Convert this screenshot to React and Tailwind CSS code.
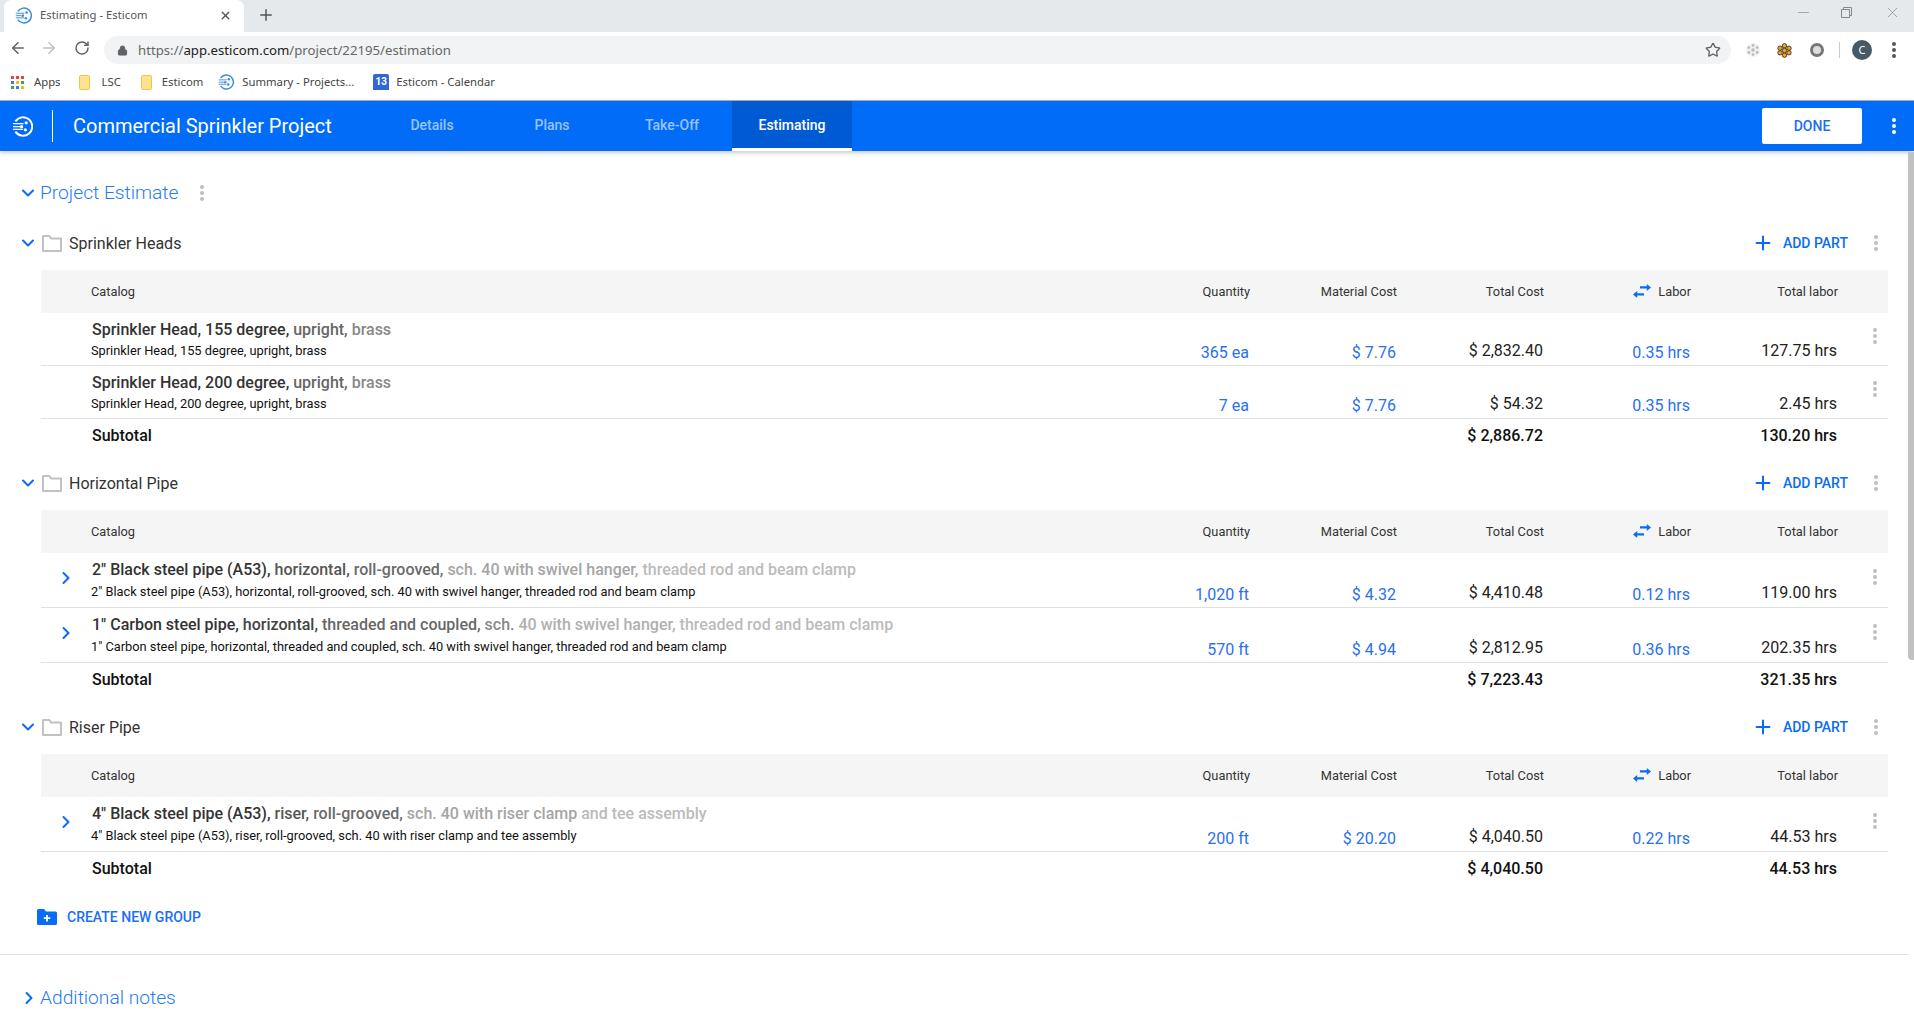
import React from "react";
import { ChevronDown, ChevronRight, Plus, X, ArrowLeft, ArrowRight, RotateCw, Lock, Star, Minus } from "lucide-react";

const groups = [
  {
    name: "Sprinkler Heads",
    rowH: "h-[53px]",
    subMt: "mt-[3px]",
    dotsPt: "pt-[15px]",
    rows: [
      {
        segs: [["Sprinkler Head, 155 degree,", "text-[#333]"], [" upright,", "text-[#666]"], [" brass", "text-[#888]"]],
        sub: "Sprinkler Head, 155 degree, upright, brass",
        qty: "365 ea", mat: "$ 7.76", total: "$ 2,832.40", labor: "0.35 hrs", tlabor: "127.75 hrs",
      },
      {
        segs: [["Sprinkler Head, 200 degree,", "text-[#333]"], [" upright,", "text-[#666]"], [" brass", "text-[#888]"]],
        sub: "Sprinkler Head, 200 degree, upright, brass",
        qty: "7 ea", mat: "$ 7.76", total: "$ 54.32", labor: "0.35 hrs", tlabor: "2.45 hrs",
      },
    ],
    subTotal: "$ 2,886.72",
    subLabor: "130.20 hrs",
  },
  {
    name: "Horizontal Pipe",
    rowH: "h-[55px]",
    subMt: "mt-[4px]",
    dotsPt: "pt-[16px]",
    expand: true,
    rows: [
      {
        segs: [
          ['2" Black steel pipe (A53),', "text-[#333]"],
          [" horizontal,", "text-[#555]"],
          [" roll-grooved,", "text-[#6b6b6b]"],
          [" sch. 40 with swivel hanger,", "text-[#a5a5a5]"],
          [" threaded rod and beam clamp", "text-[#bbb]"],
        ],
        sub: '2" Black steel pipe (A53), horizontal, roll-grooved, sch. 40 with swivel hanger, threaded rod and beam clamp',
        qty: "1,020 ft", mat: "$ 4.32", total: "$ 4,410.48", labor: "0.12 hrs", tlabor: "119.00 hrs",
      },
      {
        segs: [
          ['1" Carbon steel pipe,', "text-[#333]"],
          [" horizontal,", "text-[#444]"],
          [" threaded and coupled,", "text-[#666]"],
          [" sch.", "text-[#888]"],
          [" 40 with swivel hanger,", "text-[#b0b0b0]"],
          [" threaded rod and beam clamp", "text-[#bbb]"],
        ],
        sub: '1" Carbon steel pipe, horizontal, threaded and coupled, sch. 40 with swivel hanger, threaded rod and beam clamp',
        qty: "570 ft", mat: "$ 4.94", total: "$ 2,812.95", labor: "0.36 hrs", tlabor: "202.35 hrs",
      },
    ],
    subTotal: "$ 7,223.43",
    subLabor: "321.35 hrs",
  },
  {
    name: "Riser Pipe",
    rowH: "h-[55px]",
    subMt: "mt-[4px]",
    dotsPt: "pt-[16px]",
    expand: true,
    rows: [
      {
        segs: [
          ['4" Black steel pipe (A53),', "text-[#333]"],
          [" riser,", "text-[#555]"],
          [" roll-grooved,", "text-[#6b6b6b]"],
          [" sch. 40 with riser clamp", "text-[#a5a5a5]"],
          [" and tee assembly", "text-[#bbb]"],
        ],
        sub: '4" Black steel pipe (A53), riser, roll-grooved, sch. 40 with riser clamp and tee assembly',
        qty: "200 ft", mat: "$ 20.20", total: "$ 4,040.50", labor: "0.22 hrs", tlabor: "44.53 hrs",
      },
    ],
    subTotal: "$ 4,040.50",
    subLabor: "44.53 hrs",
  },
];

const Dots = ({ color = "bg-[#bcbfc3]" }) => (
  <div className="flex flex-col gap-[2px]">
    <span className={`w-[4px] h-[4px] rounded-full ${color}`} />
    <span className={`w-[4px] h-[4px] rounded-full ${color}`} />
    <span className={`w-[4px] h-[4px] rounded-full ${color}`} />
  </div>
);

const Logo = ({ color = "#fff", size = 21, width = 1.9 }) => (
  <svg width={size} height={size} viewBox="0 0 21 21" fill="none" stroke={color} strokeWidth={width}>
    <path d="M3.4 5.4A9.2 9.2 0 1 1 3.4 15.6" />
    <path d="M1 7.7H11.5M1 10.7H8M1 13.4H11" strokeWidth="1.2" />
    <circle cx="14.2" cy="6.8" r="1.6" fill={color} stroke="none" />
    <circle cx="9.6" cy="10.7" r="1.6" fill={color} stroke="none" />
    <circle cx="13.4" cy="13.8" r="1.6" fill={color} stroke="none" />
  </svg>
);

const FolderOutline = () => (
  <svg width="20" height="17" viewBox="0 0 20 17" fill="none" stroke="#c2c2c2" strokeWidth="2">
    <path d="M1 16V1H7.4L9.2 3.6H19V16Z" strokeLinejoin="round" />
  </svg>
);

const Swap = () => (
  <svg width="18" height="14" viewBox="0 0 18 14" fill="#0a6cf5" className="-mt-[2px]">
    <path d="M0 10.5L4.2 6.9V9.3H11V11.6H4.2V14Z" />
    <path d="M18 3.5L13.8 0V2.3H7V4.6H13.8V7Z" />
  </svg>
);

const FolderPlus = () => (
  <svg width="20" height="16" viewBox="0 0 20 16">
    <path d="M0 1.5A1.5 1.5 0 0 1 1.5 0H7L9 2.4H18.5A1.5 1.5 0 0 1 20 3.9V14.5A1.5 1.5 0 0 1 18.5 16H1.5A1.5 1.5 0 0 1 0 14.5Z" fill="#0a6cf5" />
    <path d="M9.1 6H10.9V8.3H13.2V10.1H10.9V12.4H9.1V10.1H6.8V8.3H9.1Z" fill="#fff" />
  </svg>
);

const AppsGrid = () => (
  <svg width="13" height="13" viewBox="0 0 13 13">
    <rect x="0" y="0" width="3" height="3" fill="#e8453c" />
    <rect x="5" y="0" width="3" height="3" fill="#e8453c" />
    <rect x="10" y="0" width="3" height="3" fill="#e8453c" />
    <rect x="0" y="5" width="3" height="3" fill="#3b7ded" />
    <rect x="5" y="5" width="3" height="3" fill="#fbbc05" />
    <rect x="10" y="5" width="3" height="3" fill="#34a853" />
    <rect x="0" y="10" width="3" height="3" fill="#34a853" />
    <rect x="5" y="10" width="3" height="3" fill="#3b7ded" />
    <rect x="10" y="10" width="3" height="3" fill="#fbbc05" />
  </svg>
);

const BookmarkFolder = () => (
  <svg width="11" height="15" viewBox="0 0 11 15">
    <rect x="0.5" y="0.5" width="10" height="14" rx="1" fill="#fde293" stroke="#f0c64a" />
  </svg>
);

const Calendar = () => (
  <div className="w-4 h-4 bg-[#3367d6] text-white text-[10px] leading-4 font-bold text-center rounded-t-[2px] [font-family:Roboto,sans-serif]">13</div>
);

const Bookmark = ({ icon, label, gap = "gap-2", ml = "ml-0" }) => (
  <div className={`flex items-center ${gap} ${ml}`}>
    {icon}
    <span className="text-[11.3px] text-[#444] whitespace-nowrap">{label}</span>
  </div>
);

const Row = ({ row, group }) => (
  <div className={`grid grid-cols-[50px_1fr_147px_147px_147px_147px_147px_50px] ${group.rowH} border-b border-[#e0e0e0]`}>
    <div className="flex items-start justify-center pt-[15px]">
      {group.expand && <ChevronRight size={20} color="#0a6cf5" strokeWidth={2.4} />}
    </div>
    <div className="pt-[7px] pl-px">
      <div className="text-[16px] leading-5 font-medium whitespace-nowrap">
        {row.segs.map(([t, c], i) => (
          <span key={i} className={c}>{t}</span>
        ))}
      </div>
      <div className={`${group.subMt} -ml-px text-[12.8px] leading-4 text-[#111] whitespace-nowrap`}>{row.sub}</div>
    </div>
    <div className="flex items-end justify-end pb-[2px] pr-px text-[16px] leading-5 text-[#2a6ff0]">{row.qty}</div>
    <div className="flex items-end justify-end pb-[2px] pr-px text-[16px] leading-5 text-[#2a6ff0]">{row.mat}</div>
    <div className="flex items-end justify-end pb-[4px] pr-px text-[16px] leading-5 text-[#222]">{row.total}</div>
    <div className="flex items-end justify-end pb-[2px] pr-px text-[16px] leading-5 text-[#2a6ff0]">{row.labor}</div>
    <div className="flex items-end justify-end pb-[4px] pr-px text-[16px] leading-5 text-[#222]">{row.tlabor}</div>
    <div className={`${group.dotsPt} pl-[35px]`}>
      <Dots />
    </div>
  </div>
);

const Group = ({ group }) => (
  <div className="mb-3">
    <div className="flex items-center h-10 pl-[18px] pr-[36px]">
      <ChevronDown size={20} color="#0a6cf5" strokeWidth={2.4} />
      <div className="ml-[4px]"><FolderOutline /></div>
      <div className="ml-[7px] pt-px text-[16px] text-[#333]">{group.name}</div>
      <div className="ml-auto flex items-center text-[#0a6cf5]">
        <Plus size={22} strokeWidth={2.2} />
        <span className="ml-[9px] pt-px text-[14px] font-medium">ADD PART</span>
        <div className="ml-[26px]"><Dots /></div>
      </div>
    </div>
    <div className="mt-[7px] ml-[41px] w-[1847px]">
      <div className="grid grid-cols-[50px_1fr_147px_147px_147px_147px_147px_50px] h-[43px] items-center bg-[#f5f5f5] text-[12.8px] text-[#333]">
        <div />
        <div>Catalog</div>
        <div className="text-right">Quantity</div>
        <div className="text-right">Material Cost</div>
        <div className="text-right">Total Cost</div>
        <div className="flex items-center justify-end gap-[7px]"><Swap /><span>Labor</span></div>
        <div className="text-right">Total labor</div>
        <div />
      </div>
      {group.rows.map((row, i) => (
        <Row key={i} row={row} group={group} />
      ))}
      <div className="grid grid-cols-[50px_1fr_147px_147px_147px_147px_147px_50px] h-8 pt-px items-center text-[16px] font-medium text-[#111]">
        <div />
        <div className="pl-px">Subtotal</div>
        <div />
        <div />
        <div className="text-right pr-px">{group.subTotal}</div>
        <div />
        <div className="text-right pr-px">{group.subLabor}</div>
        <div />
      </div>
    </div>
  </div>
);

const ChromeBar = () => (
  <div className="[font-family:'Noto_Sans',sans-serif]">
    <div className="h-8 bg-[#e6e9ec] flex items-center">
      <div className="ml-[4px] w-[240px] h-8 bg-white rounded-t-[8px] flex items-center pl-[11px] pr-[12px] pb-[2px]">
        <Logo color="#3b8ed8" size={17} width={1.8} />
        <span className="ml-[8px] text-[11.3px] text-[#555]">Estimating - Esticom</span>
        <X size={13} color="#555" strokeWidth={2.5} className="ml-auto" />
      </div>
      <Plus size={18} color="#555" strokeWidth={2} className="ml-[13px] mb-[2px]" />
      <div className="ml-auto flex items-center text-[#888] pb-[8px]">
        <Minus size={17} strokeWidth={1} className="mr-[29px]" />
        <svg width="11" height="11" viewBox="0 0 11 11" fill="none" stroke="#888" className="mr-[32px]">
          <path d="M0.5 2.5H8.5V10.5H0.5ZM2.5 2.5V0.5H10.5V8.5H8.5" />
        </svg>
        <X size={17} strokeWidth={1} className="mr-[13px]" />
      </div>
    </div>
    <div className="h-8 bg-white flex items-center">
      <ArrowLeft size={18} color="#5f6368" strokeWidth={2} className="ml-[9px]" />
      <ArrowRight size={18} color="#bdc1c6" strokeWidth={2} className="ml-[13px]" />
      <RotateCw size={16} color="#5f6368" strokeWidth={2.2} className="ml-[16px]" />
      <div className="ml-[14px] mt-[4px] w-[1627px] h-7 bg-[#f1f3f4] rounded-full flex items-center pl-[13px] pr-[10px]">
        <Lock size={11} color="#5f6368" fill="#5f6368" />
        <span className="ml-[10px] pt-[2px] text-[13.2px] text-[#666]">
          https://<span className="text-[#222]">app.esticom.com</span>/project/22195/estimation
        </span>
        <Star size={16} color="#5f6368" strokeWidth={2} className="ml-auto" />
      </div>
      <div className="ml-[15px] mt-[4px] flex items-center">
        <svg width="14" height="14" viewBox="0 0 14 14" fill="#b9bdc2">
          <circle cx="7" cy="7" r="7" fill="#f1f1f1" />
          <circle cx="7" cy="7" r="1.8" /><circle cx="7" cy="2.4" r="1.4" /><circle cx="7" cy="11.6" r="1.4" />
          <circle cx="2.8" cy="4.6" r="1.4" /><circle cx="11.2" cy="4.6" r="1.4" /><circle cx="2.8" cy="9.4" r="1.4" /><circle cx="11.2" cy="9.4" r="1.4" />
        </svg>
        <svg width="15" height="15" viewBox="0 0 15 15" fill="#f5a623" stroke="#222" strokeWidth="0.8" className="ml-[17px]">
          <circle cx="7.5" cy="2.8" r="2.2" /><circle cx="7.5" cy="12.2" r="2.2" /><circle cx="3" cy="5.2" r="2.2" /><circle cx="12" cy="5.2" r="2.2" />
          <circle cx="3" cy="9.8" r="2.2" /><circle cx="12" cy="9.8" r="2.2" /><circle cx="7.5" cy="7.5" r="2.2" />
        </svg>
        <div className="ml-[18px] w-[14px] h-[14px] rounded-full bg-[#ddd] border-[3px] border-[#777]" />
        <div className="ml-[15px] w-px h-4 bg-[#ccc]" />
        <div className="ml-[12px] w-5 h-5 rounded-full bg-[#455a64] text-white text-[11px] leading-5 text-center">C</div>
        <div className="ml-[20px]"><Dots color="bg-[#555]" /></div>
      </div>
    </div>
    <div className="h-9 bg-white flex items-center pl-[11px]">
      <Bookmark icon={<AppsGrid />} label="Apps" gap="gap-[10px]" />
      <Bookmark icon={<BookmarkFolder />} label="LSC" gap="gap-[12px]" ml="ml-[18px]" />
      <Bookmark icon={<BookmarkFolder />} label="Esticom" gap="gap-[10px]" ml="ml-[20px]" />
      <Bookmark icon={<Logo color="#3b8ed8" size={16} width={1.8} />} label="Summary - Projects..." ml="ml-[15px]" />
      <Bookmark icon={<Calendar />} label="Esticom - Calendar" gap="gap-[7px]" ml="ml-[19px]" />
    </div>
  </div>
);

const AppHeader = () => (
  <div className="border-t border-[#aaa] h-[51px] bg-[#006cf8] flex items-center shadow-[0_2px_4px_rgba(0,0,0,0.2)] relative">
    <div className="ml-[12px]"><Logo /></div>
    <div className="ml-[19px] w-px h-8 bg-white" />
    <div className="ml-[20px] w-[299px] text-[20px] text-white whitespace-nowrap">Commercial Sprinkler Project</div>
    {["Details", "Plans", "Take-Off"].map((t) => (
      <div key={t} className="w-[120px] pb-[2px] text-center text-[14px] font-medium text-white/60">{t}</div>
    ))}
    <div className="w-[120px] h-full pt-px flex items-center justify-center text-[14px] font-medium text-white bg-[#005ad3] border-b-[3px] border-white">
      Estimating
    </div>
    <div className="ml-auto w-[100px] h-9 bg-white rounded-[2px] flex items-center justify-center text-[14px] font-medium text-[#1a6ff5]">DONE</div>
    <div className="ml-[30px] mr-[18px]"><Dots color="bg-white" /></div>
  </div>
);

export default function App() {
  return (
    <div className="relative w-[1914px] h-[1035px] overflow-hidden bg-white [font-family:Roboto,sans-serif]">
      <ChromeBar />
      <AppHeader />
      <div className="pt-[22px]">
        <div className="flex items-center h-10 pl-[18px]">
          <ChevronDown size={20} color="#0a6cf5" strokeWidth={2.4} />
          <span className="ml-[2px] pt-px text-[19.2px] font-light text-[#1f7bf7]">Project Estimate</span>
          <div className="ml-[22px]"><Dots /></div>
        </div>
        <div className="mt-[10px]">
          {groups.map((g) => (
            <Group key={g.name} group={g} />
          ))}
        </div>
        <div className="flex items-center h-8 mt-[17px] pl-[37px]">
          <FolderPlus />
          <span className="ml-[10px] text-[14px] font-medium text-[#1a6ff5]">CREATE NEW GROUP</span>
        </div>
        <div className="mt-[21px] mr-[6px] border-t border-[#e0e0e0]" />
        <div className="flex items-center h-10 mt-[23px] pl-[19px]">
          <ChevronRight size={20} color="#0a6cf5" strokeWidth={2.4} />
          <span className="ml-px text-[19.2px] font-light text-[#1f7bf7]">Additional notes</span>
        </div>
      </div>
      <div className="absolute right-0 top-[152px] w-[6px] h-[508px] bg-[#c1c1c1] rounded-bl-[4px]" />
    </div>
  );
}
